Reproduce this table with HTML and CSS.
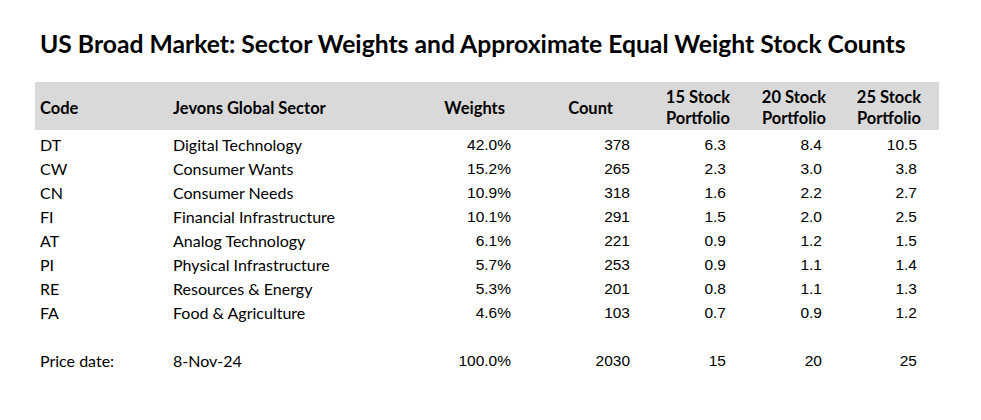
FILE: index.html
```html
<!DOCTYPE html>
<html>
<head>
<meta charset="utf-8">
<link rel="stylesheet" href="styles.css">
</head>
<body>
<div class="page">
  <h1 class="title">US Broad Market: Sector Weights and Approximate Equal Weight Stock Counts</h1>
  <div class="table">
    <div class="row head">
      <div class="cell txt single">Code</div>
      <div class="cell txt single">Jevons Global Sector</div>
      <div class="cell num single h-w">Weights</div>
      <div class="cell num single h-c">Count</div>
      <div class="cell num h-p">15 Stock<br>Portfolio</div>
      <div class="cell num h-p">20 Stock<br>Portfolio</div>
      <div class="cell num h-p">25 Stock<br>Portfolio</div>
    </div>
    <div class="body">
    <div class="row"><div class="cell txt">DT</div><div class="cell txt">Digital Technology</div><div class="cell num">42.0%</div><div class="cell num">378</div><div class="cell num">6.3</div><div class="cell num">8.4</div><div class="cell num">10.5</div></div>
    <div class="row"><div class="cell txt">CW</div><div class="cell txt">Consumer Wants</div><div class="cell num">15.2%</div><div class="cell num">265</div><div class="cell num">2.3</div><div class="cell num">3.0</div><div class="cell num">3.8</div></div>
    <div class="row"><div class="cell txt">CN</div><div class="cell txt">Consumer Needs</div><div class="cell num">10.9%</div><div class="cell num">318</div><div class="cell num">1.6</div><div class="cell num">2.2</div><div class="cell num">2.7</div></div>
    <div class="row"><div class="cell txt">FI</div><div class="cell txt">Financial Infrastructure</div><div class="cell num">10.1%</div><div class="cell num">291</div><div class="cell num">1.5</div><div class="cell num">2.0</div><div class="cell num">2.5</div></div>
    <div class="row"><div class="cell txt">AT</div><div class="cell txt">Analog Technology</div><div class="cell num">6.1%</div><div class="cell num">221</div><div class="cell num">0.9</div><div class="cell num">1.2</div><div class="cell num">1.5</div></div>
    <div class="row"><div class="cell txt">PI</div><div class="cell txt">Physical Infrastructure</div><div class="cell num">5.7%</div><div class="cell num">253</div><div class="cell num">0.9</div><div class="cell num">1.1</div><div class="cell num">1.4</div></div>
    <div class="row"><div class="cell txt">RE</div><div class="cell txt">Resources &amp; Energy</div><div class="cell num">5.3%</div><div class="cell num">201</div><div class="cell num">0.8</div><div class="cell num">1.1</div><div class="cell num">1.3</div></div>
    <div class="row"><div class="cell txt">FA</div><div class="cell txt">Food &amp; Agriculture</div><div class="cell num">4.6%</div><div class="cell num">103</div><div class="cell num">0.7</div><div class="cell num">0.9</div><div class="cell num">1.2</div></div>
    <div class="row blank"></div>
    <div class="row"><div class="cell txt">Price date:</div><div class="cell txt">8-Nov-24</div><div class="cell num">100.0%</div><div class="cell num">2030</div><div class="cell num">15</div><div class="cell num">20</div><div class="cell num">25</div></div>
    </div>
  </div>
</div>
</body>
</html>
```
FILE: styles.css
```css
* { box-sizing: border-box; }
html, body { margin: 0; padding: 0; background: #ffffff; }
body { color: #000000; font-family: "Lato", "Liberation Sans", sans-serif; }
.page { padding: 30px 0 0 35px; }
.title {
  margin: 0 0 0 5px;
  font-family: "Lato", sans-serif;
  font-weight: 700;
  font-size: 24.7px;
  line-height: 28px;
  height: 52px;
}
.table { width: 904px; }
.body { padding-top: 3px; }
.row {
  display: grid;
  grid-template-columns: 133px 252px 96px 119px 96px 96px 95px 17px;
  height: 24px;
  align-items: center;
}
.row.head {
  background: #d9d9d9;
  height: 48px;
  padding-top: 3px;
}
.cell { font-size: 16px; line-height: 24px; white-space: nowrap; }
.cell.txt { padding-left: 5px; }
.cell.num {
  text-align: right;
  padding-right: 5px;
  font-family: "Liberation Sans", Arial, sans-serif;
  font-size: 15.5px;
}
.head .cell { font-weight: 700; font-family: "Lato", sans-serif; font-size: 16.5px; }
.head .cell.h-p { line-height: 21px; padding-right: 1px; }
.head .cell.h-w { padding-right: 11px; }
.head .cell.h-c { padding-right: 22px; }
```
